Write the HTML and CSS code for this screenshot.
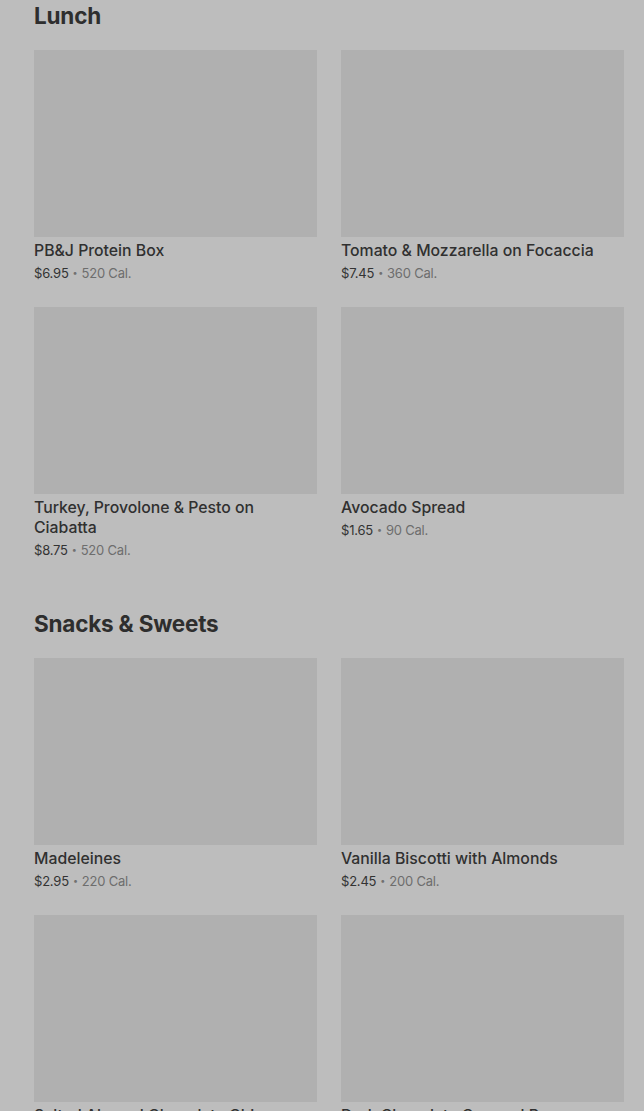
FILE: index.html
```html
<!DOCTYPE html>
<html lang="en">
<head>
<meta charset="utf-8">
<title>Menu</title>
<link rel="stylesheet" href="styles.css">
</head>
<body>
<main class="page">
  <section class="section">
    <h2 class="section-title">Lunch</h2>
    <div class="grid">
      <article class="card">
        <div class="thumb"></div>
        <h3 class="name">PB&amp;J Protein Box</h3>
        <p class="meta"><span class="price">$6.95</span><span class="dot">•</span><span class="cal">520 Cal.</span></p>
      </article>
      <article class="card">
        <div class="thumb"></div>
        <h3 class="name">Tomato &amp; Mozzarella on Focaccia</h3>
        <p class="meta"><span class="price">$7.45</span><span class="dot">•</span><span class="cal">360 Cal.</span></p>
      </article>
      <article class="card">
        <div class="thumb"></div>
        <h3 class="name">Turkey, Provolone &amp; Pesto on Ciabatta</h3>
        <p class="meta"><span class="price">$8.75</span><span class="dot">•</span><span class="cal">520 Cal.</span></p>
      </article>
      <article class="card">
        <div class="thumb"></div>
        <h3 class="name">Avocado Spread</h3>
        <p class="meta"><span class="price">$1.65</span><span class="dot">•</span><span class="cal">90 Cal.</span></p>
      </article>
    </div>
  </section>
  <section class="section">
    <h2 class="section-title">Snacks &amp; Sweets</h2>
    <div class="grid">
      <article class="card">
        <div class="thumb"></div>
        <h3 class="name">Madeleines</h3>
        <p class="meta"><span class="price">$2.95</span><span class="dot">•</span><span class="cal">220 Cal.</span></p>
      </article>
      <article class="card">
        <div class="thumb"></div>
        <h3 class="name">Vanilla Biscotti with Almonds</h3>
        <p class="meta"><span class="price">$2.45</span><span class="dot">•</span><span class="cal">200 Cal.</span></p>
      </article>
      <article class="card">
        <div class="thumb"></div>
        <h3 class="name">Salted Almond Chocolate Chip Cookie</h3>
        <p class="meta"><span class="price">$3.25</span><span class="dot">•</span><span class="cal">380 Cal.</span></p>
      </article>
      <article class="card">
        <div class="thumb"></div>
        <h3 class="name">Dark Chocolate Caramel Bar</h3>
        <p class="meta"><span class="price">$3.45</span><span class="dot">•</span><span class="cal">260 Cal.</span></p>
      </article>
    </div>
  </section>
</main>
</body>
</html>
```
FILE: styles.css
```css
html, body {
  margin: 0;
  padding: 0;
  background: #bdbdbd;
  height: 1111px;
  overflow: hidden;
}
body {
  font-family: Inter, "Noto Sans", "Liberation Sans", sans-serif;
  color: #2f2f2f;
}
.page {
  padding: 0 20px 0 34px;
}
.section {
  margin-bottom: 48px;
}
.section-title {
  margin: 0 0 17px;
  font-size: 22.5px;
  line-height: 32px;
  font-weight: 700;
  letter-spacing: -0.2px;
  color: #2e2e2e;
}
.grid {
  display: grid;
  grid-template-columns: 283px 283px;
  column-gap: 24px;
  row-gap: 23px;
}
.card {
  display: flex;
  flex-direction: column;
}
.thumb {
  height: 187px;
  background: #b0b0b0;
  margin-top: 1px;
}
.name {
  margin: 4px 0 0;
  font-size: 15.8px;
  line-height: 20px;
  font-weight: 500;
  color: #303030;
}
.meta {
  display: flex;
  align-items: center;
  height: 20px;
  margin: 2px 0 0;
  font-size: 13px;
  line-height: 20px;
  letter-spacing: -0.2px;
  color: #333;
}
.dot {
  color: #707070;
  margin: 0 4px;
  font-size: 9px;
}
.cal {
  color: #6d6d6d;
}
```
